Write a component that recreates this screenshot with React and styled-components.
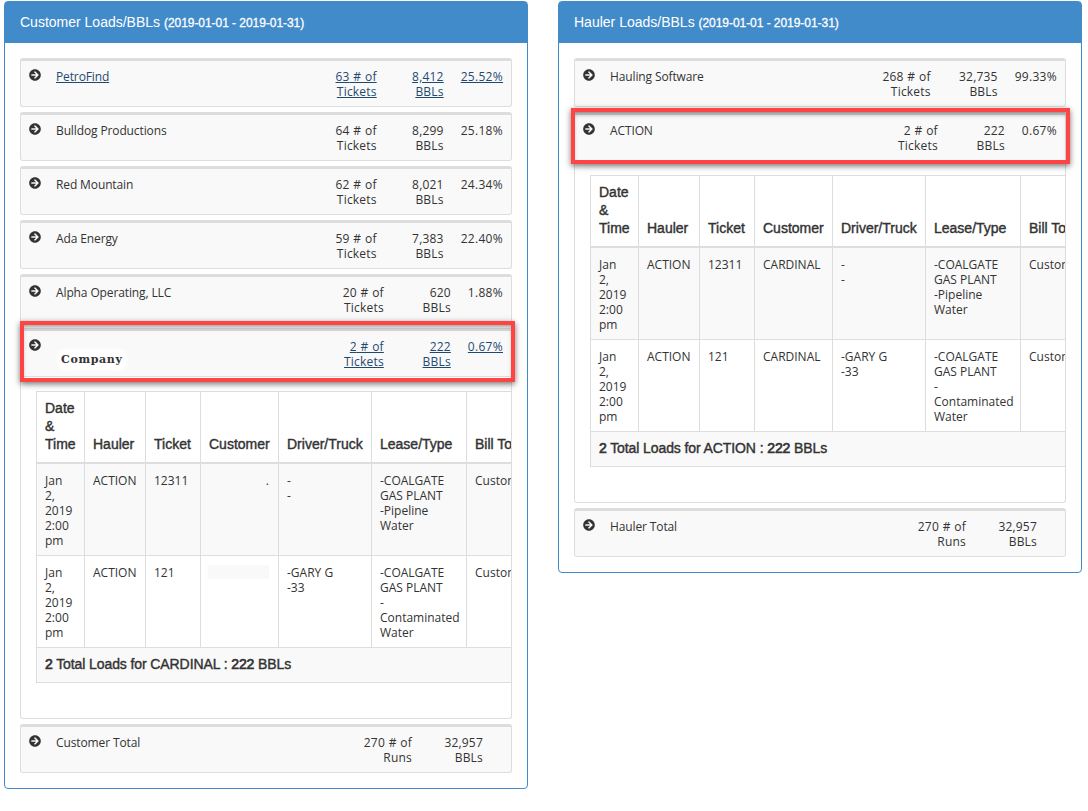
import React from "react";
import styled, { createGlobalStyle } from "styled-components";
import { FaArrowCircleRight } from "react-icons/fa";

const GlobalStyle = createGlobalStyle`
  html, body {
    margin: 0;
    padding: 0;
    background: #fff;
    color: #333;
    font-family: "Open Sans", "Liberation Sans", sans-serif;
    font-size: 12px;
  }
`;

const Page = styled.div`
  display: flex;
  align-items: flex-start;
  gap: 30px;
  padding: 1px 0 0 4px;
  width: 1088px;
  box-sizing: border-box;
`;

const Panel = styled.section`
  width: 524px;
  box-sizing: border-box;
  border: 1px solid #428bca;
  border-radius: 4px;
  background: #fff;
`;

const PanelHeading = styled.div`
  height: 41px;
  box-sizing: border-box;
  padding: 12px 15px 0;
  background: #428bca;
  color: #fff;
  font-family: "Liberation Sans", Arial, sans-serif;
  font-size: 14px;
  line-height: 16px;
  white-space: nowrap;

  small {
    font-size: 12px;
    -webkit-text-stroke: 0.3px #fff;
    letter-spacing: -0.05px;
  }
`;

const PanelBody = styled.div`
  padding: 15px;
  display: flex;
  flex-direction: column;
  gap: 5px;
`;

const Item = styled.div`
  position: relative;
  border-radius: 3px;
  background: #fff;
`;

const ItemHeader = styled.div`
  display: flex;
  align-items: flex-start;
  height: 49px;
  box-sizing: border-box;
  padding: 8px 8px 0 8px;
  background: #f9f9f9;
  border: 1px solid #ddd;
  border-top-width: 3px;
  border-radius: ${(p) => (p.$open ? "3px 3px 0 0" : "3px")};
  line-height: 15px;
  color: ${(p) => (p.$link ? "#1f4a70" : "#333")};
  text-decoration: ${(p) => (p.$link ? "underline" : "none")};
`;

const IconCell = styled.div`
  width: 27px;
  flex: none;
  color: #333;

  svg {
    display: block;
    width: 12px;
    height: 12px;
    margin-left: -0.5px;
  }
`;

const Name = styled.div`
  flex: 1;
  white-space: nowrap;
  letter-spacing: -0.12px;
`;

const Company = styled.span`
  display: inline-block;
  margin: 14px 0 0 5px;
  font-family: "DejaVu Serif", "Liberation Serif", serif;
  font-size: 11px;
  font-weight: 700;
  letter-spacing: 0.65px;
  line-height: 13px;
  color: #333;
  background: #fff;
  box-shadow: 0 0 3px 4px #fff;
  border-radius: 4px;
`;

const Count = styled.div`
  text-align: right;
  white-space: nowrap;
  letter-spacing: 0.2px;
  word-spacing: 0.4px;
`;

const Bbls = styled.div`
  width: ${(p) => (p.$total ? "71px" : "67px")};
  text-align: right;
  white-space: nowrap;
  letter-spacing: 0.2px;
`;

const Percent = styled.div`
  width: ${(p) => (p.$total ? "20px" : "auto")};
  margin-left: ${(p) => (p.$total ? "0" : "17px")};
  text-align: right;
  white-space: nowrap;
  letter-spacing: 0.3px;
`;

const Annotation = styled.div`
  position: absolute;
  top: ${(p) => p.$top}px;
  left: ${(p) => p.$left}px;
  width: ${(p) => p.$width}px;
  height: ${(p) => p.$height}px;
  box-sizing: border-box;
  border: 4px solid #ff4444;
  box-shadow: 0 2px 6px rgba(0, 0, 0, 0.55), inset 0 4px 5px -2px rgba(0, 0, 0, 0.4);
  pointer-events: none;
`;

const Collapse = styled.div`
  border: 1px solid #ddd;
  border-top: 0;
  border-radius: 0 0 3px 3px;
  padding: 14px 0 35px 15px;
  overflow: hidden;
`;

const TableClip = styled.div`
  overflow: hidden;
`;

const Table = styled.table`
  table-layout: fixed;
  width: 559px;
  border-collapse: collapse;
  border: 1px solid #ddd;
`;

const Th = styled.th`
  padding: 7px 7px 9px 8px;
  border: 1px solid #ddd;
  border-bottom-width: 2px;
  text-align: left;
  vertical-align: bottom;
  font-family: "Liberation Sans", Arial, sans-serif;
  font-size: 14px;
  font-weight: 400;
  -webkit-text-stroke: 0.4px #333;
  line-height: 18px;
  color: #333;
  overflow: hidden;
`;

const Tr = styled.tr`
  background: ${(p) => (p.$striped ? "#f9f9f9" : "#fff")};
`;

const Td = styled.td`
  padding: 9px 7px 7px 8px;
  border: 1px solid #ddd;
  vertical-align: top;
  line-height: 15px;
  color: #333;
  overflow: hidden;
`;

const DateText = styled.div`
  width: min-content;
`;

const FootCell = styled.td`
  padding: 7px 8px 9px;
  height: 18px;
  border: 1px solid #ddd;
  font-family: "Liberation Sans", Arial, sans-serif;
  font-size: 14px;
  letter-spacing: -0.1px;
  -webkit-text-stroke: 0.4px #333;
  line-height: 18px;
  color: #333;

  b {
    font-weight: 400;
    -webkit-text-stroke: 0.7px #333;
  }
`;

const Dot = styled.div`
  text-align: right;
  padding-right: 2px;
`;

const Redacted = styled.div`
  width: 61px;
  height: 14px;
  margin-left: -1px;
  background: #f9f9f9;
`;

const widths = [48, 61, 55, 78, 93, 95, 129];
const headers = ["Date & Time", "Hauler", "Ticket", "Customer", "Driver/Truck", "Lease/Type", "Bill To"];

const customerRows = [
  { name: "PetroFind", count: "63", bbl: "8,412", pct: "25.52%", link: true },
  { name: "Bulldog Productions", count: "64", bbl: "8,299", pct: "25.18%" },
  { name: "Red Mountain", count: "62", bbl: "8,021", pct: "24.34%" },
  { name: "Ada Energy", count: "59", bbl: "7,383", pct: "22.40%" },
  { name: "Alpha Operating, LLC", count: "20", bbl: "620", pct: "1.88%" },
];

const ItemRow = ({ name, count, unit = "Tickets", bbl, pct, link, open, total }) => (
  <ItemHeader $link={link} $open={open}>
    <IconCell>
      <FaArrowCircleRight />
    </IconCell>
    <Name>{name}</Name>
    <Count>
      {count} # of
      <br />
      {unit}
    </Count>
    <Bbls $total={total}>
      {bbl}
      <br />
      BBLs
    </Bbls>
    <Percent $total={total}>{pct}</Percent>
  </ItemHeader>
);

const LoadsTable = ({ customerOne, customerTwo, owner }) => (
  <TableClip>
    <Table>
      <colgroup>
        {widths.map((w, i) => (
          <col key={i} width={w} />
        ))}
      </colgroup>
      <thead>
        <tr>
          {headers.map((h) => (
            <Th key={h}>{h}</Th>
          ))}
        </tr>
      </thead>
      <tbody>
        <Tr $striped>
          <Td>
            <DateText>Jan 2, 2019 2:00 pm</DateText>
          </Td>
          <Td>ACTION</Td>
          <Td>12311</Td>
          <Td>{customerOne}</Td>
          <Td>
            -<br />-
          </Td>
          <Td>
            -COALGATE GAS PLANT
            <br />
            -Pipeline Water
          </Td>
          <Td>Customer</Td>
        </Tr>
        <Tr>
          <Td>
            <DateText>Jan 2, 2019 2:00 pm</DateText>
          </Td>
          <Td>ACTION</Td>
          <Td>121</Td>
          <Td>{customerTwo}</Td>
          <Td>
            -GARY G
            <br />
            -33
          </Td>
          <Td>
            -COALGATE GAS PLANT
            <br />-<br />
            Contaminated Water
          </Td>
          <Td>Customer</Td>
        </Tr>
        <Tr $striped>
          <FootCell colSpan={7}>
            <b>2</b> Total Loads for {owner} : <b>222</b> BBLs
          </FootCell>
        </Tr>
      </tbody>
    </Table>
  </TableClip>
);

export default function App() {
  return (
    <>
      <GlobalStyle />
      <Page>
        <Panel>
          <PanelHeading>
            Customer Loads/BBLs <small>(2019-01-01 - 2019-01-31)</small>
          </PanelHeading>
          <PanelBody>
            {customerRows.map((r) => (
              <Item key={r.name}>
                <ItemRow {...r} />
              </Item>
            ))}
            <Item>
              <ItemRow name={<Company>Company</Company>} count="2" bbl="222" pct="0.67%" link open />
              <Collapse>
                <LoadsTable customerOne={<Dot>.</Dot>} customerTwo={<Redacted />} owner="CARDINAL" />
              </Collapse>
              <Annotation $top={-7} $left={0} $width={495} $height={61} />
            </Item>
            <Item>
              <ItemRow name="Customer Total" count="270" unit="Runs" bbl="32,957" total />
            </Item>
          </PanelBody>
        </Panel>
        <Panel>
          <PanelHeading>
            Hauler Loads/BBLs <small>(2019-01-01 - 2019-01-31)</small>
          </PanelHeading>
          <PanelBody>
            <Item>
              <ItemRow name="Hauling Software" count="268" bbl="32,735" pct="99.33%" />
            </Item>
            <Item>
              <ItemRow name="ACTION" count="2" bbl="222" pct="0.67%" open />
              <Collapse>
                <LoadsTable customerOne="CARDINAL" customerTwo="CARDINAL" owner="ACTION" />
              </Collapse>
              <Annotation $top={-4} $left={-3} $width={499} $height={56} />
            </Item>
            <Item>
              <ItemRow name="Hauler Total" count="270" unit="Runs" bbl="32,957" total />
            </Item>
          </PanelBody>
        </Panel>
      </Page>
    </>
  );
}
